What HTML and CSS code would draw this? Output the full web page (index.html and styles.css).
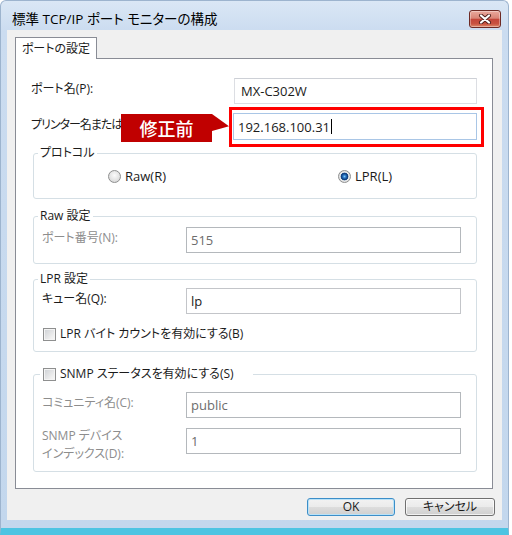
FILE: index.html
```html
<!DOCTYPE html>
<html lang="ja">
<head>
<meta charset="utf-8">
<title>標準 TCP/IP ポート モニターの構成</title>
<link rel="stylesheet" href="styles.css">
</head>
<body>
<div class="window">
  <div class="titlebar">
    <span class="title">標準 TCP/IP ポート モニターの構成</span>
    <span class="close" aria-label="閉じる">
      <svg width="14" height="10" viewBox="0 0 14 10">
        <path d="M3 1.5 L11 8.5 M11 1.5 L3 8.5" stroke="#4e1f1b" stroke-width="4" stroke-linecap="round" fill="none"/>
        <path d="M3 1.5 L11 8.5 M11 1.5 L3 8.5" stroke="#ffffff" stroke-width="2.2" stroke-linecap="round" fill="none"/>
      </svg>
    </span>
  </div>
  <div class="client">
    <div class="tabstrip"><div class="tab">ポートの設定</div></div>
    <div class="panel">
      <div class="row">
        <span class="lbl">ポート名(P):</span>
        <div class="field f-name">MX-C302W</div>
      </div>
      <div class="row row-ip">
        <span class="lbl lbl-ip">プリンター名または</span>
        <div class="field f-ip">192.168.100.31<span class="caret"></span></div>
      </div>
      <div class="callout">修正前</div>

      <fieldset class="group g-protocol">
        <legend>プロトコル</legend>
        <div class="radios">
          <span class="radio"><span class="dot"></span>Raw(R)</span>
          <span class="radio on"><span class="dot"></span>LPR(L)</span>
        </div>
      </fieldset>

      <fieldset class="group g-raw">
        <legend>Raw 設定</legend>
        <div class="frow">
          <span class="lbl dis">ポート番号(N):</span>
          <div class="field f-grp f-dis">515</div>
        </div>
      </fieldset>

      <fieldset class="group g-lpr">
        <legend>LPR 設定</legend>
        <div class="frow">
          <span class="lbl">キュー名(Q):</span>
          <div class="field f-grp f-en">lp</div>
        </div>
        <div class="checkrow"><span class="cb"></span>LPR バイト カウントを有効にする(B)</div>
      </fieldset>

      <fieldset class="group g-snmp">
        <legend class="legend-check"><span class="cb"></span>SNMP ステータスを有効にする(S)</legend>
        <div class="frow">
          <span class="lbl dis">コミュニティ名(C):</span>
          <div class="field f-grp f-dis">public</div>
        </div>
        <div class="frow frow-2">
          <span class="lbl dis lbl-2">SNMP デバイス<br>インデックス(D):</span>
          <div class="field f-grp f-dis">1</div>
        </div>
      </fieldset>
    </div>
    <div class="buttons">
      <span class="btn btn-ok">OK</span>
      <span class="btn btn-cancel">キャンセル</span>
    </div>
  </div>
</div>
</body>
</html>
```

FILE: styles.css
```css
* { box-sizing: border-box; }
html, body { margin: 0; padding: 0; }
body {
  width: 512px;
  height: 535px;
  overflow: hidden;
  background: #ffffff;
  font-family: "Open Sans", "Noto Sans CJK JP", sans-serif;
  font-size: 12px;
  line-height: 16px;
  color: #1b1b1b;
  font-feature-settings: "palt";
}

.window {
  width: 509px;
  height: 535px;
  display: flex;
  flex-direction: column;
  background: linear-gradient(#dae7f5 0, #cbdcf0 30px, #c3d7ed 100%);
  border: 1px solid #9db4ce;
  border-bottom: 7px solid #4dc4e2;
  border-radius: 6px 6px 0 0;
}

.titlebar {
  height: 29px;
  flex: none;
  display: flex;
  justify-content: space-between;
  align-items: flex-start;
  padding: 9px 7px 0 11px;
}
.title { font-size: 13.5px; line-height: 18px; color: #000; }
.close {
  width: 32px;
  height: 18px;
  border: 1px solid #6e2a24;
  border-radius: 3px;
  background: linear-gradient(#eaa99d 0, #d98577 45%, #c4463a 52%, #c9523f 80%, #de8a6b 100%);
  box-shadow: inset 0 0 0 1px rgba(255,255,255,.35);
  display: flex;
  align-items: center;
  justify-content: center;
}

.client {
  flex: 1;
  margin: 0 6px 8px 6px;
  background: #f0f0f0;
  padding: 7px 9px 0 8px;
  display: flex;
  flex-direction: column;
}

.tabstrip { display: flex; margin-bottom: -1px; }
.tab {
  position: relative;
  z-index: 1;
  width: 82px;
  height: 22px;
  background: #ffffff;
  border: 1px solid #898c95;
  border-bottom: none;
  padding-top: 3px;
  text-align: center;
  font-size: 12px;
}

.panel {
  position: relative;
  height: 431px;
  flex: none;
  background: #ffffff;
  border: 1px solid #898c95;
  padding: 19px 15px 0 15px;
}

.row {
  display: flex;
  align-items: center;
  justify-content: space-between;
  height: 26px;
}
.row-ip { margin-top: 9px; height: 27px; }
.lbl { padding-bottom: 4px; white-space: nowrap; }
.lbl-ip { letter-spacing: -1px; }
.dis { color: #8d8d8d; }

.field {
  height: 26px;
  border: 1px solid #c5c7cc;
  background: #ffffff;
  display: flex;
  align-items: center;
  padding-left: 4px;
  white-space: nowrap;
  font-size: 13px;
}
.f-name { width: 243px; padding-left: 6px; border-color: #dcdee3; border-top-color: #cdd0d6; }
.f-ip { width: 244px; height: 27px; border-color: #a9c6e6; position: relative; }
.f-ip::after {
  content: "";
  position: absolute;
  top: -7px;
  left: -5px;
  right: -8px;
  bottom: -8px;
  border: 3px solid #ff0000;
}
.caret { display: inline-block; width: 1px; height: 15px; background: #000; margin-left: 1px; }
.f-grp { width: 275px; }
.f-en { border-color: #c3c5c9; }
.f-dis { border-color: #b4b8bc; color: #6d6d6d; }

.callout {
  position: absolute;
  left: 105px;
  top: 55px;
  width: 91px;
  height: 28px;
  background: #c00000;
  color: #ffffff;
  font-family: "Noto Sans CJK JP", sans-serif;
  font-size: 18px;
  font-weight: 500;
  line-height: 28px;
  text-align: center;
  font-feature-settings: normal;
}
.callout::after {
  content: "";
  position: absolute;
  left: 100%;
  top: 0;
  width: 17px;
  height: 17px;
  background: #c00000;
  clip-path: polygon(0 0, 100% 72%, 0 100%);
}

.group {
  margin: 0 0 0 2px;
  border: 1px solid #d5dfe5;
  border-radius: 3px;
  padding: 0;
  min-width: 0;
}
.group legend { margin-left: 4px; padding: 0 2px; line-height: 16px; }
.g-raw legend, .g-lpr legend { margin-left: -4px; }

.g-protocol { margin-top: 5px; padding: 7px 0 14px 0; }
.radios { display: flex; padding-left: 74px; }
.radio { flex: none; height: 16px; display: flex; align-items: center; gap: 4px; font-size: 13px; }
.radio:first-child { width: 230px; }
.dot {
  width: 13px;
  height: 13px;
  flex: none;
  border-radius: 50%;
  border: 1px solid #8e8f8f;
  background: radial-gradient(circle at 50% 40%, #fbfbfb 0, #e6e6e6 50%, #cfcfcf 100%);
}
.on .dot {
  background: radial-gradient(circle at 50% 50%, #7cc8f4 0, #2a77c6 1.5px, #0f3f80 3px, #1c4f8c 3.6px, #e9e9e9 4.2px, #d2d2d2 100%);
}

.g-raw { margin-top: 9px; padding: 3px 15px 10px 8px; }
.g-lpr { margin-top: 7px; padding: 1px 15px 9px 8px; }
.g-snmp { margin-top: 14px; padding: 10px 15px 17px 8px; }

.frow { display: flex; align-items: center; justify-content: space-between; height: 26px; }
.frow-2 { margin-top: 10px; align-items: flex-start; }
.lbl-2 { line-height: 18px; padding: 0; margin-top: -1px; }

.checkrow { margin-top: 12px; height: 16px; padding-left: 1px; display: flex; align-items: center; gap: 4px; }
.cb {
  width: 13px;
  height: 13px;
  flex: none;
  border: 1px solid #8e8f8f;
  background: linear-gradient(135deg, #cdd0d4 0, #eeeeee 70%, #f8f8f8 100%);
  box-shadow: inset 0 0 0 1px #f4f4f4;
}
.group .legend-check {
  margin-left: -2px;
  padding: 0 19px 0 3px;
  display: flex;
  align-items: center;
  gap: 4px;
}

.buttons {
  display: flex;
  justify-content: flex-end;
  gap: 10px;
  margin: 9px -2px 0 0;
}
.btn {
  height: 18px;
  border: 1px solid #707070;
  border-radius: 3px;
  background: linear-gradient(#f2f2f2 0, #ebebeb 50%, #dddddd 51%, #cfcfcf 100%);
  box-shadow: inset 0 0 0 1px rgba(255,255,255,.7);
  display: flex;
  align-items: center;
  justify-content: center;
  font-size: 12px;
}
.btn-ok { width: 88px; border-color: #3c8ec8; box-shadow: inset 0 0 0 1px #b9e2f8; }
.btn-cancel { width: 90px; }
```
